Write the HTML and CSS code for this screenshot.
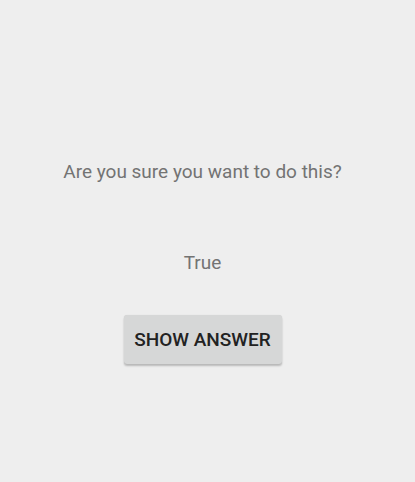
FILE: index.html
```html
<!DOCTYPE html>
<html>
<head>
<meta charset="utf-8">
<link rel="stylesheet" href="styles.css">
</head>
<body>
<main class="screen">
  <p class="question">Are you sure you want to do this?</p>
  <p class="answer">True</p>
  <button class="show-btn">SHOW ANSWER</button>
</main>
</body>
</html>
```
FILE: styles.css
```css
html, body {
  margin: 0;
  padding: 0;
  background: #eeeeee;
  width: 415px;
  height: 482px;
  overflow: hidden;
}
.screen {
  display: flex;
  flex-direction: column;
  align-items: center;
  padding-top: 159px;
  padding-right: 10px;
  font-family: Roboto, "Noto Sans", sans-serif;
}
.question {
  margin: 0;
  font-size: 19px;
  line-height: 26px;
  color: #737373;
}
.answer {
  margin: 65px 0 0;
  font-size: 19px;
  line-height: 26px;
  color: #737373;
}
.show-btn {
  margin-top: 39px;
  width: 158px;
  height: 49px;
  border: none;
  border-radius: 3px;
  background: #d6d7d7;
  box-shadow: 0 2px 2px rgba(0,0,0,0.22), 0 0 1px rgba(0,0,0,0.12);
  font-family: Roboto, "Noto Sans", sans-serif;
  font-weight: 500;
  font-size: 19px;
  color: #222222;
  padding: 0;
}
```
